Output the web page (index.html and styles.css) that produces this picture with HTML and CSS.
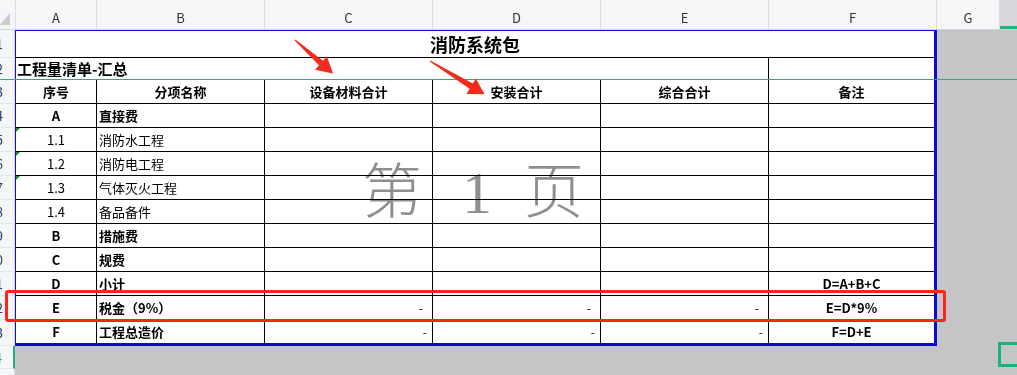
FILE: index.html
```html
<!DOCTYPE html>
<html lang="zh-CN">
<head>
<meta charset="utf-8">
<title>消防系统包</title>
<link rel="stylesheet" href="styles.css">
</head>
<body>
<div class="app">
  <div class="colheads">
    <div class="ch corner"><svg width="10" height="12" viewBox="0 0 10 12"><polygon points="0,12 10,0 10,12" fill="#c9cbd0"/></svg></div>
    <div class="ch ca">A</div>
    <div class="ch cw">B</div>
    <div class="ch cw">C</div>
    <div class="ch cw">D</div>
    <div class="ch cw">E</div>
    <div class="ch cw">F</div>
    <div class="ch cg">G</div>
    <div class="ch csel"></div>
  </div>
  <div class="body">
    <div class="rowheads">
      <div class="rh r1">1</div>
      <div class="rh r2">2</div>
      <div class="rh r24">3</div>
      <div class="rh r24">4</div>
      <div class="rh r24">5</div>
      <div class="rh r24">6</div>
      <div class="rh r24">7</div>
      <div class="rh r24">8</div>
      <div class="rh r24">9</div>
      <div class="rh r24">10</div>
      <div class="rh r24">11</div>
      <div class="rh r24">12</div>
      <div class="rh r13">13</div>
      <div class="rh r14 active">14</div>
      <div class="rh r15">15</div>
    </div>
    <div class="pane">
      <div class="sheet">
        <div class="c title span6 nr">消防系统包</div>

        <div class="c sub span5">工程量清单-汇总</div>
        <div class="c nr"></div>

        <div class="c hd">序号</div>
        <div class="c hd">分项名称</div>
        <div class="c hd">设备材料合计</div>
        <div class="c hd">安装合计</div>
        <div class="c hd">综合合计</div>
        <div class="c hd nr">备注</div>

        <div class="c ctr b">A</div>
        <div class="c name b">直接费</div>
        <div class="c"></div><div class="c"></div><div class="c"></div><div class="c nr"></div>

        <div class="c ctr flag">1.1</div>
        <div class="c name">消防水工程</div>
        <div class="c"></div><div class="c"></div><div class="c"></div><div class="c nr"></div>

        <div class="c ctr flag">1.2</div>
        <div class="c name">消防电工程</div>
        <div class="c"></div><div class="c"></div><div class="c"></div><div class="c nr"></div>

        <div class="c ctr flag">1.3</div>
        <div class="c name">气体灭火工程</div>
        <div class="c"></div><div class="c"></div><div class="c"></div><div class="c nr"></div>

        <div class="c ctr">1.4</div>
        <div class="c name">备品备件</div>
        <div class="c"></div><div class="c"></div><div class="c"></div><div class="c nr"></div>

        <div class="c ctr b">B</div>
        <div class="c name b">措施费</div>
        <div class="c"></div><div class="c"></div><div class="c"></div><div class="c nr"></div>

        <div class="c ctr b">C</div>
        <div class="c name b">规费</div>
        <div class="c"></div><div class="c"></div><div class="c"></div><div class="c nr"></div>

        <div class="c ctr b">D</div>
        <div class="c name b">小计</div>
        <div class="c"></div><div class="c"></div><div class="c"></div>
        <div class="c ctr b nr">D=A+B+C</div>

        <div class="c ctr b">E</div>
        <div class="c name b">税金（9%）</div>
        <div class="c num">-</div><div class="c num">-</div><div class="c num">-</div>
        <div class="c ctr b nr">E=D*9%</div>

        <div class="c ctr b nb">F</div>
        <div class="c name b nb">工程总造价</div>
        <div class="c num num2 nb">-</div><div class="c num num2 nb">-</div><div class="c num num2 nb">-</div>
        <div class="c ctr b nr nb">F=D+E</div>
      </div>
    </div>
  </div>

  <div class="freeze"></div>
  <div class="watermark"><span class="wm1">第</span><span class="wm2">1</span><span class="wm3">页</span></div>
  <div class="redbox"></div>
  <div class="selcell"></div>
  <svg class="arrows" width="1017" height="375" viewBox="0 0 1017 375">
    <polygon fill="#f22c1c" points="295.4,39.5 323.0,60.7 326.9,56.2 333,73.5 315.1,69.8 319.0,65.3 294.6,40.5"/>
    <polygon fill="#f22c1c" points="430.3,60.5 472.8,83.6 475.9,78.5 484.5,94.2 466.5,93.9 469.6,88.8 429.7,61.5"/>
  </svg>
</div>
</body>
</html>
```

FILE: styles.css
```css
* { box-sizing: border-box; }

body {
  margin: 0;
  font-family: "Noto Sans CJK SC", "Microsoft YaHei", sans-serif;
  background: #c5c4c7;
}

.app {
  position: relative;
  width: 1017px;
  height: 375px;
  overflow: hidden;
  background: #c5c4c7;
}

/* column headers */
.colheads {
  display: flex;
  height: 30px;
  background: #f5f6f8;
  border-bottom: 1px solid #d3d5da;
}
.ch {
  flex: none;
  display: flex;
  align-items: center;
  justify-content: center;
  padding-top: 5px;
  font-size: 13px;
  color: #333;
  border-right: 1px solid #dcdee3;
}
.corner {
  width: 16px;
  align-items: flex-end;
  justify-content: flex-start;
  padding: 0 0 4px 0;
}
.corner svg { display: block; }
.ca { width: 81px; }
.cw { width: 168px; }
.cg { width: 63px; }
.csel {
  flex: 1;
  border-right: none;
  background: #d5d7dd;
  box-shadow: inset 0 -3px 0 #22b07b;
}

/* body */
.body {
  display: flex;
  align-items: flex-start;
}

.rowheads {
  flex: none;
  width: 15px;
  background: #f5f6f8;
  height: 345px;
}
.rh {
  display: flex;
  align-items: center;
  justify-content: flex-end;
  padding-right: 11px;
  overflow: hidden;
  font-size: 13px;
  color: #2c3b58;
  border-right: 1px solid #d7d9de;
  border-bottom: 1px solid #e4e6ea;
  white-space: nowrap;
}
.r1 { height: 28px; }
.r2 { height: 22px; }
.r24 { height: 24px; }
.r13 { height: 26px; }
.r14 { height: 23px; }
.r15 { height: 30px; }
.rh.active {
  color: #16a86c;
  border-right: 2px solid #1db27a;
}

.pane {
  flex: none;
}

/* sheet grid */
.sheet {
  width: 922px;
  display: grid;
  grid-template-columns: 81px 168px 168px 168px 168px 165px;
  grid-template-rows: 27px 22px repeat(10, 24px) 23px;
  background: #fff;
  border-top: 1px solid #1010d6;
  border-left: 1px solid #1010d6;
  border-right: 3px solid #0a0ad4;
  border-bottom: 3px solid #0a0ad4;
}
.c {
  border-right: 1px solid #000;
  border-bottom: 1px solid #000;
  font-size: 13px;
  color: #000;
  display: flex;
  align-items: center;
  white-space: nowrap;
  overflow: hidden;
}
.nr { border-right: none; }
.nb { border-bottom: none; }
.span6 { grid-column: span 6; }
.span5 { grid-column: span 5; }

.title {
  justify-content: center;
  font-size: 18px;
  font-weight: bold;
}
.sub {
  font-size: 15px;
  font-weight: bold;
  padding-left: 1px;
}
.hd {
  justify-content: center;
  font-weight: bold;
}
.ctr { justify-content: center; }
.b { font-weight: bold; }
.name { padding-left: 2px; }
.num {
  justify-content: flex-end;
  padding-right: 9px;
  font-size: 12px;
}
.num2 { padding-right: 5px; }

.flag { position: relative; }
.flag::before {
  content: "";
  position: absolute;
  left: 0;
  top: 0;
  border-top: 4px solid #1a8a2a;
  border-right: 4px solid transparent;
}

/* overlays */
.freeze {
  position: absolute;
  left: 0;
  right: 0;
  top: 79px;
  height: 1px;
  background: #3ba67a;
}

.watermark {
  position: absolute;
  left: 362px;
  top: 151px;
  display: flex;
  align-items: baseline;
  font-size: 60px;
  line-height: 72px;
  color: #8f8f8f;
  mix-blend-mode: multiply;
  pointer-events: none;
}
.wm1, .wm3 { font-family: "Noto Sans CJK SC", sans-serif; font-weight: 300; }
.wm2 {
  font-family: "Liberation Serif", serif;
  font-weight: normal;
  margin: 0 32px 0 40px;
}

.redbox {
  position: absolute;
  left: 5px;
  top: 290px;
  width: 941px;
  height: 32px;
  border: 3px solid #ff2417;
  border-radius: 3px;
}

.selcell {
  position: absolute;
  left: 998px;
  top: 342px;
  width: 30px;
  height: 25px;
  border: 3px solid #1db27a;
}

.arrows {
  position: absolute;
  left: 0;
  top: 0;
  pointer-events: none;
}
```
